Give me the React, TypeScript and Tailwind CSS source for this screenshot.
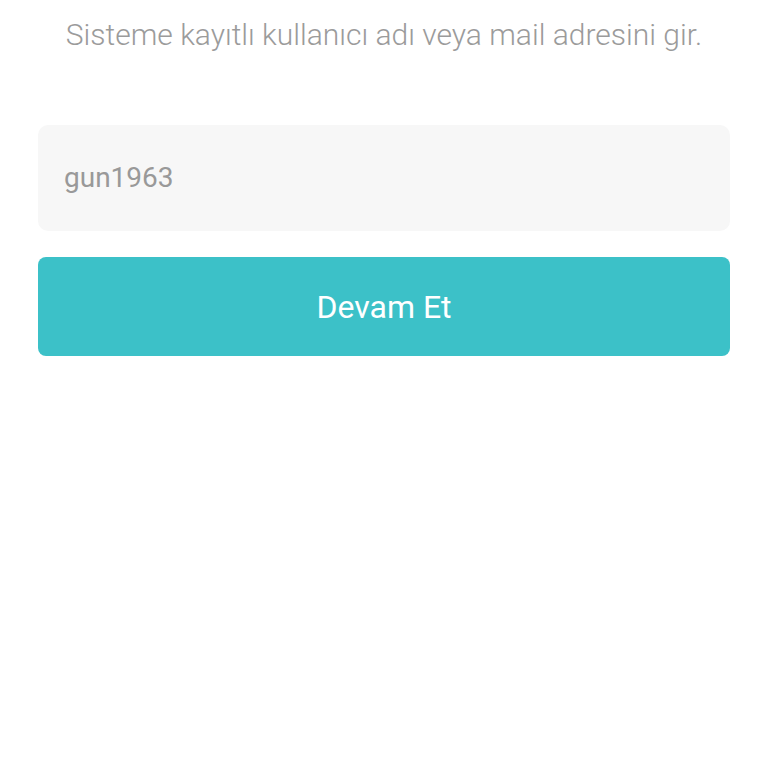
export default function App() {
  return (
    <div className="min-h-screen bg-white" style={{ fontFamily: "Roboto, 'Noto Sans', sans-serif" }}>
      <div className="px-[38px] pt-[15px]">
        <p className="text-center text-[30px] font-light text-[#9b9b9b] leading-[40px] whitespace-nowrap">
          Sisteme kayıtlı kullanıcı adı veya mail adresini gir.
        </p>
        <div className="mt-[70px] h-[106px] rounded-[10px] bg-[#f7f7f7] flex items-center px-[26px]">
          <span className="text-[28px] text-[#999999]">gun1963</span>
        </div>
        <button className="mt-[26px] w-full h-[99px] rounded-[8px] bg-[#3cc1c8] text-white text-[32px] flex items-center justify-center">
          Devam Et
        </button>
      </div>
    </div>
  );
}
